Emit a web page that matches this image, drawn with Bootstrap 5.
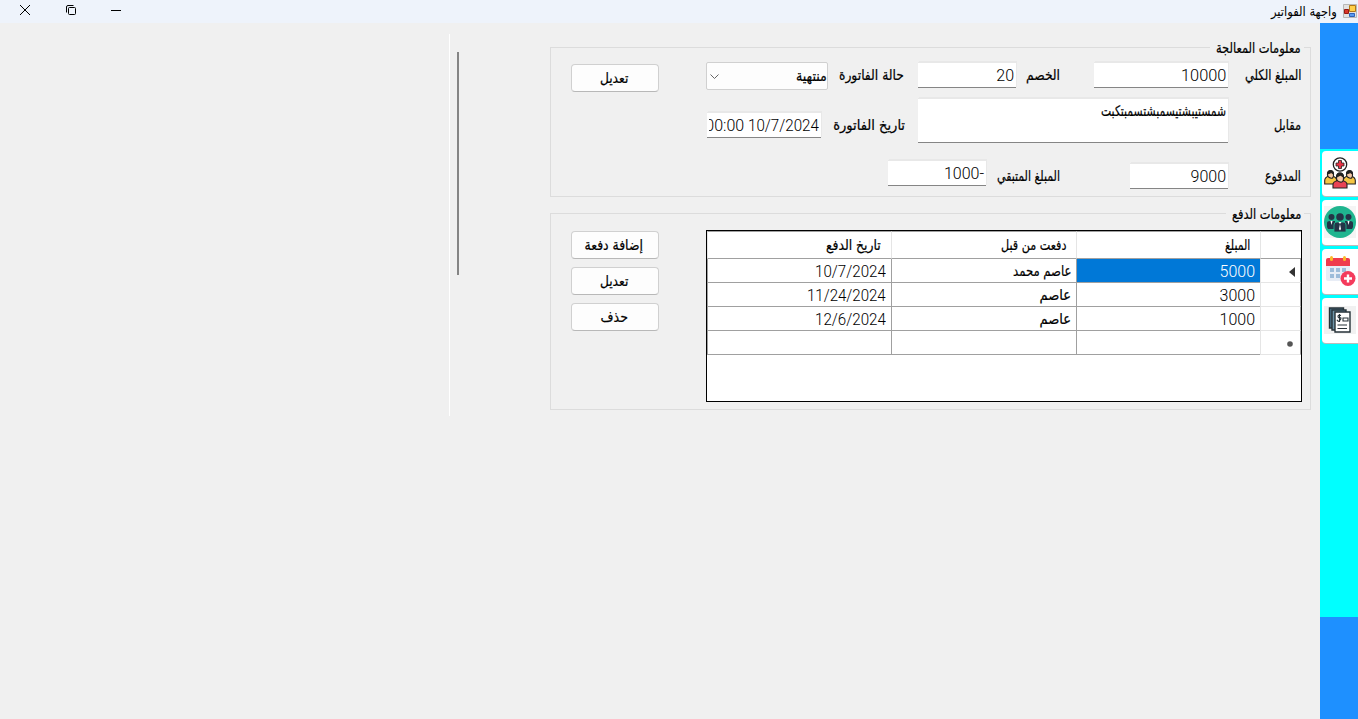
<!DOCTYPE html>
<html lang="ar" dir="rtl">
<head>
<meta charset="utf-8">
<title>واجهة الفواتير</title>
<link href="https://cdn.jsdelivr.net/npm/bootstrap@5.3.0/dist/css/bootstrap.min.css" rel="stylesheet">
<script src="https://cdn.jsdelivr.net/npm/bootstrap@5.3.0/dist/js/bootstrap.bundle.min.js"></script>
<style>
body{font:300 16px/20px Roboto,"DejaVu Sans Condensed","DejaVu Sans",sans-serif;background:#f0f0f0;color:#000;height:719px;overflow:hidden}
.ar{font-family:"DejaVu Sans Condensed","DejaVu Sans",sans-serif;font-stretch:condensed;font-size:14.5px;font-weight:400;-webkit-text-stroke:.2px}
.ar,.num{white-space:nowrap;display:inline-block;transform-origin:right center}
.num{direction:ltr}
.btn .ar{transform-origin:center}
.titlebar{height:23px;background:#eef3fb}
.titlebar .ar{font-size:13px;-webkit-text-stroke:0}
.app-icon{margin-right:1px;margin-left:6px;margin-top:-1px}
.win-btns{gap:36px;padding-left:20px;margin-top:-3px}
.win-btns svg:first-child{margin-left:-1px;margin-right:1px}
.side{width:38px;background:#1e90ff;padding-top:126px}
.side-menu{height:468px;background:#0ff;padding:2px 0 0 2px}
.tile{height:45px;margin-bottom:4px;padding:6px 2px 0;background:#fff;border-radius:4px 0 0 4px;box-shadow:0 1px 0 #bbb}
.tile svg{display:block}
.forms{padding-top:24px;margin-right:9px}
.groupbox{width:761px;border:1px solid #dcdcdc;position:relative;padding-right:9px}
.g-one{height:150px;margin-bottom:16px;padding-top:14px}
.g-two{height:197px;padding:16px 8px 0 0}
.caption{position:absolute;top:-10px;right:6px;background:#f0f0f0;padding:0 3px;line-height:20px;width:94px}
.g-two .caption{width:78px}
.lbl{flex:none}
.w1{width:73px}.w2{width:78px;padding-right:34px}.w3{width:90px;padding-right:14px}.w4{width:97px;padding-right:13px}.w5{width:144px;padding-right:70px}
.row-a{height:28px}.row-b{height:45px;margin-top:8px}.row-c{height:29px;margin-top:17px}
.row-a .lbl{padding-top:3px}.row-b .lbl{padding-top:8px}.row-c .lbl{padding-top:6px}
.field{flex:none;background:#fff;border:1px solid #e8e8e8;border-width:1px 0;border-bottom-color:#858585;box-shadow:1px -1px 0 #e8e8e8;height:26px;padding:3px 2px 0;white-space:nowrap}
.f-lg{width:134px}.f-md{width:98px}.f-dt{width:114px}.f-area{width:310px;height:45px;padding-top:2px}
.f-sel{flex:none;width:122px;height:28px;background:#fdfdfd;border:1px solid #d0d0d0;border-radius:2px;padding:0 0 0 3px}
.btnw{width:88px;height:28px;background:#fdfdfd;border:1px solid #d0d0d0;border-bottom-color:#b8b8b8;border-radius:4px;padding:0 0 0 0;line-height:24px;color:#000}
.btnw .ar{position:relative;left:-1px}
.g-one .btnw{margin:2px 47px 0 0}
.stack{gap:8px;margin:1px 47px 0 0}
.datagrid{width:596px;height:172px;border:1px solid #000;background:#fff}
.datagrid table{width:594px;table-layout:fixed;border-collapse:separate;border-spacing:0;margin:0}
.datagrid td,.datagrid th{height:24px;padding:2px 5px 0 0;border:0 solid #a0a0a0;border-width:0 0 1px 1px;font-weight:300;line-height:20px;vertical-align:middle;text-align:right}
.datagrid th{height:28px;padding-top:0;border-top-width:1px;border-left-color:#e5e5e5;padding-right:10px}
.datagrid td .ar{position:relative;top:-1px}
.datagrid .rh{border-color:#e5e5e5;padding-right:5px;border-right:1px solid #a0a0a0}
.datagrid .rh svg{display:block}
.datagrid .picked{background:#0078d7;color:#fff}
.divide{width:1px;height:382px;background:#fff;margin-top:11px}
.thumb{width:2px;height:223px;background:#858585;margin:29px 91px 0 7px}
</style>
</head>
<body class="d-flex flex-column">
<header class="titlebar d-flex align-items-center flex-shrink-0">
<svg class="app-icon" width="14" height="14" viewBox="0 0 14 14"><path d="M.5.5h13v13H.5z" fill="#e2e2e2" stroke="#b8b8b8"/><path d="M6.500 1.500h6v6h-6z" fill="#ffd04a" stroke="#b07818"/><path d="M1.500 5.500h4v4h-4z" fill="#d9352b" stroke="#941a14"/><path d="M6.500 9.500h5v3h-5z" fill="#5a9bf0" stroke="#2d62b8"/></svg>
<span class="ar" data-w="66">واجهة الفواتير</span>
<div class="win-btns d-flex me-auto align-items-center">
<svg width="10" height="10"><path d="M0 5.500h10" stroke="#000"/></svg>
<svg width="10" height="10" fill="none" stroke="#000"><rect x="2.500" y="2.500" width="7" height="7" rx="1"/><path d="M.5 7.500V2A1.500 1.500 0 0 1 2 .5h5.500"/></svg>
<svg width="10" height="10"><path d="M0 0l10 10M10 0L0 10" stroke="#000"/></svg>
</div>
</header>
<main class="d-flex flex-grow-1">
<nav class="side flex-shrink-0"><div class="side-menu">
<div class="tile"><svg width="32" height="32" viewBox="0 0 32 32"><circle cx="16" cy="7.500" r="6.700" fill="#fff" stroke="#222" stroke-width="1.300"/><path d="M14.500 3.500h3V6h2.500v3h-2.500v2.500h-3V9H12V6h2.500z" fill="#e93446" stroke="#222" stroke-width=".8"/><g stroke="#222" stroke-width="1.100"><path d="M.7 27v-3.500q0-3 4-4.500h4q4 1.500 4 4.500V27zM19.300 27v-3.500q0-3 4-4.500h4q4 1.500 4 4.500V27z" fill="#f5c643"/><path d="M3.500 18q0-4 3-4t3 4-3 3-3-3zM22.500 18q0-4 3-4t3 4-3 3-3-3z" fill="#f5c9a5"/><path d="M3.500 17q0-3.500 3-3.500t3 3.500l-2-1.500zM22.500 17q0-3.500 3-3.500t3 3.500l-2-1.500z" fill="#222"/><path d="M9 31v-3.500q0-3 5-4h4q5 1 5 4V31z" fill="#e94355"/><path d="M12.500 21q0-5 3.500-5t3.500 5-3.500 4-3.500-4z" fill="#f5c9a5"/><path d="M12.500 20q0-4 3.500-4t3.500 4l-3-2z" fill="#222"/></g></svg></div>
<div class="tile"><svg width="32" height="32" viewBox="0 0 32 32"><path d="M0 0h32v32H0z" fill="#f5f5f5"/><circle cx="16" cy="16" r="16" fill="#1fb58f"/><g fill="#243447"><circle cx="7.500" cy="11" r="3"/><circle cx="24.500" cy="11" r="3"/><path d="M3 21v-4q0-2 3-2h5v8H4zM21 15h5q3 0 3 2v4l-1 2h-7z"/></g><path d="M10 26v-7q0-3 3-3h6q3 0 3 3v7z" fill="#243447" stroke="#1fb58f" stroke-width=".8"/><circle cx="16" cy="11" r="3.800" fill="#243447"/><path d="M14.500 16h3L16 18zM16 18l1 5-1 1.500-1-1.500zM6.500 15h2l-1 4zM23.500 15h2l-1 4z" fill="#fff"/></svg></div>
<div class="tile"><svg width="32" height="32" viewBox="0 0 32 32"><path d="M2 9h24v15q0 2-2 2H4q-2 0-2-2z" fill="#e8edf6"/><path d="M2 11V5q0-2 2-2h20q2 0 2 2v6z" fill="#ef3b4d"/><g fill="#fbb829"><rect x="6" y="1" width="3" height="5" rx="1.500"/><rect x="19" y="1" width="3" height="5" rx="1.500"/></g><path d="M6 13h4v4H6zM12 13h4v4h-4zM18 13h4v4h-4zM6 19h4v4H6zM12 19h4v4h-4z" fill="#9ebcda"/><circle cx="24" cy="23.500" r="7.500" fill="#f43b5c"/><path d="M24 19.500v8M20 23.500h8" stroke="#fff" stroke-width="2.400"/></svg></div>
<div class="tile"><svg width="32" height="32" viewBox="0 0 32 32"><path d="M0 2h32v28H0z" fill="#f1f1f1"/><g stroke="#263238" stroke-width="1.400"><path d="M5.500 4h14v20h-14z" fill="#4c748c"/><path d="M8 6h14v20H8z" fill="#6e96aa"/><path d="M11 8h15v20H11z" fill="#fff"/></g><path d="M17 11.500q-3-1-3 .8t2 1.500 0 2.300-3-.3M15.500 10v8M19 17h5v-3h-5zM13.500 21H23M13.500 24.500H23" stroke="#263238" stroke-width="1.100" fill="none"/></svg></div>
</div></nav>
<section class="forms flex-shrink-0">
<div class="groupbox g-one d-flex">
<div class="caption"><span class="ar" data-w="85">معلومات المعالجة</span></div>
<div>
<div class="row-a d-flex">
<div class="lbl w1"><span class="ar" data-w="56">المبلغ الكلي</span></div><div class="field f-lg"><span class="num" data-w="45">10000</span></div>
<div class="lbl w2"><span class="ar" data-w="34">الخصم</span></div><div class="field f-md">20</div>
<div class="lbl w3"><span class="ar" data-w="65">حالة الفاتورة</span></div>
<div class="f-sel d-flex align-items-center justify-content-between"><span class="ar" data-w="31">منتهية</span><svg width="9" height="5" fill="none" stroke="#666"><path d="M.5.5l4 4 4-4"/></svg></div>
</div>
<div class="row-b d-flex align-items-center">
<div class="lbl w1"><span class="ar" data-w="27">مقابل</span></div><div class="field f-area align-self-start"><span class="ar" data-w="125">شمستيبشتيسمبشتسمبتكبت</span></div>
<div class="lbl w4"><span class="ar" data-w="72">تاريخ الفاتورة</span></div><div class="field f-dt mt-2"><div class="overflow-hidden"><span class="num" data-w="71">10/7/2024</span><span class="num">12:00:00</span></div></div>
</div>
<div class="row-c d-flex">
<div class="lbl w1"><span class="ar" data-w="36">المدفوع</span></div><div class="field f-md align-self-end">9000</div>
<div class="lbl w5"><span class="ar" data-w="63">المبلغ المتبقي</span></div><div class="field f-md">-1000</div>
</div>
</div>
<button class="btn btnw"><span class="ar" data-w="28">تعديل</span></button>
</div>
<div class="groupbox g-two d-flex">
<div class="caption"><span class="ar" data-w="69">معلومات الدفع</span></div>
<div class="datagrid"><table>
<colgroup><col style="width:41px"><col style="width:184px"><col style="width:185px"><col style="width:184px"></colgroup>
<tr><th></th><th><span class="ar" data-w="25">المبلغ</span></th><th><span class="ar" data-w="65">دفعت من قبل</span></th><th><span class="ar" data-w="55">تاريخ الدفع</span></th></tr>
<tr><td class="rh"><svg width="6" height="10"><path d="M6 0v10L0 5z" fill="#333"/></svg></td><td class="picked">5000</td><td><span class="ar" data-w="58">عاصم محمد</span></td><td><span class="num" data-w="71">10/7/2024</span></td></tr>
<tr><td class="rh"></td><td>3000</td><td><span class="ar" data-w="32">عاصم</span></td><td><span class="num" data-w="79">11/24/2024</span></td></tr>
<tr><td class="rh"></td><td>1000</td><td><span class="ar" data-w="32">عاصم</span></td><td><span class="num" data-w="71">12/6/2024</span></td></tr>
<tr><td class="rh"><svg width="8" height="7"><circle cx="3" cy="4" r="2.800" fill="#555"/></svg></td><td></td><td></td><td></td></tr>
</table></div>
<div class="stack d-flex flex-column">
<button class="btn btnw"><span class="ar" data-w="58">إضافة دفعة</span></button>
<button class="btn btnw"><span class="ar" data-w="28">تعديل</span></button>
<button class="btn btnw"><span class="ar" data-w="27">حذف</span></button>
</div>
</div>
</section>
<div class="thumb flex-shrink-0"></div>
<div class="divide"></div>
</main>
<script>
// Condense each label to its set width in pixels
document.querySelectorAll('[data-w]').forEach(e=>{e.style.transform='scaleX('+e.dataset.w/e.offsetWidth+')'});
</script>
</body>
</html>
